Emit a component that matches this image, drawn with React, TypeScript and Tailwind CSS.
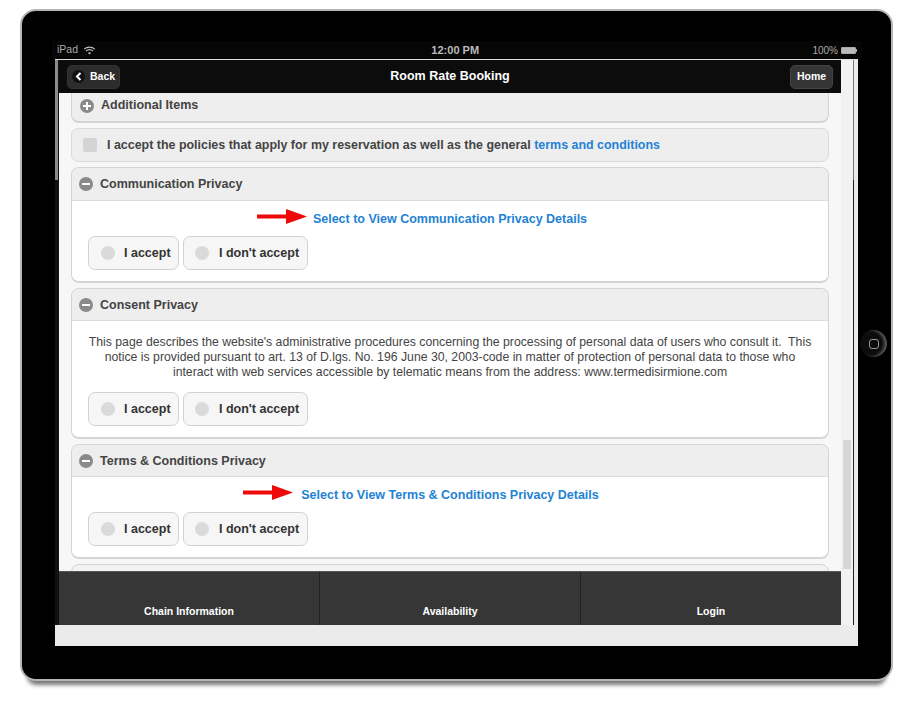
import React from 'react';

function Accept() {
  return (
    <div className="flex gap-[4px]">
      {['I accept', "I don't accept"].map((label, i) => (
        <div key={label} className={`flex h-[34px] items-center rounded-[7px] border border-[#d2d2d2] bg-[#f6f6f6] ${i === 0 ? 'w-[91px] pl-[12px]' : 'w-[125px] pl-[11px]'}`}>
          <span className="h-[14px] w-[14px] shrink-0 rounded-full bg-[#dadada]" />
          <span className={`whitespace-nowrap text-[12.5px] font-bold text-[#333] ${i === 0 ? 'ml-[9px]' : 'ml-[10px]'}`}>{label}</span>
        </div>
      ))}
    </div>
  );
}

function Toggle({ open }: { open?: boolean }) {
  return (
    <span className="relative h-[14px] w-[14px] shrink-0 rounded-full bg-[#8a8a8a]">
      <span className="absolute left-[3px] top-[6px] h-[2px] w-[8px] bg-white" />
      {!open && <span className="absolute left-[6px] top-[3px] h-[8px] w-[2px] bg-white" />}
    </span>
  );
}

function Arrow({ className }: { className: string }) {
  return (
    <svg width="50" height="15" viewBox="0 0 50 15" className={className}>
      <rect x="0" y="5.5" width="30" height="4" fill="#ee0a0a" />
      <polygon points="29,0 50,7.5 29,15" fill="#ee0a0a" />
    </svg>
  );
}

function Section({ title, height, headHeight, children }: { title: string; height: string; headHeight: string; children: React.ReactNode }) {
  return (
    <div className={`${height} overflow-hidden rounded-[8px] border border-[#d4d4d4] border-b-[2px] bg-white`}>
      <div className={`flex ${headHeight} items-center gap-[7px] border-b border-[#dcdcdc] bg-[#eeeeee] pl-[7px]`}>
        <Toggle open />
        <span className="pt-[1px] text-[12.5px] font-bold text-[#444]">{title}</span>
      </div>
      {children}
    </div>
  );
}

function LinkBody({ arrowClass, text }: { arrowClass: string; text: string }) {
  return (
    <div className="px-[16px]">
      <div className="flex h-[35px] items-center justify-center pb-[1px] pt-[2px] text-[12.5px] font-bold text-[#1f82d4]">
        <span className="relative">
          <Arrow className={arrowClass} />
          {text}
        </span>
      </div>
      <Accept />
    </div>
  );
}

export default function App() {
  return (
    <div className="relative h-[709px] w-[908px] overflow-hidden bg-white pl-[20px] pt-[9px] font-['Liberation_Sans',Arial,sans-serif]">
      {/* device */}
      <div className="relative h-[672px] w-[873px] rounded-[16px] border-2 border-[#b5b5b5] bg-black pl-[33px] pt-[30px] shadow-[0_11px_4px_-7px_#777]">
        {/* status bar */}
        <div className="-ml-[3px] flex h-[18px] w-[810px] items-center justify-between bg-[#060606] pl-[5px] pr-[5px] text-[#aaa]">
          <div className="flex items-center gap-[5px] text-[10.5px]">
            <span>iPad</span>
            <svg width="13" height="9" viewBox="0 0 12 9" fill="none" stroke="#bbb" strokeWidth="1.2">
              <path d="M0.7 3.2C3.6 0.3 8.4 0.3 11.3 3.2" />
              <path d="M2.5 5C4.4 3.2 7.6 3.2 9.5 5" />
              <path d="M4.4 6.9C5.3 6 6.7 6 7.6 6.9L6 8.5Z" fill="#bbb" stroke="none" />
            </svg>
          </div>
          <span className="pl-[2px] text-[11px] font-bold text-[#bbb]">12:00 PM</span>
          <div className="flex items-center gap-[3px] text-[10px]">
            <span>100%</span>
            <span className="h-[7px] w-[15px] rounded-[1px] border border-[#aaa] bg-[#bbb]" />
            <span className="-ml-[3px] h-[3px] w-[1px] bg-[#aaa]" />
          </div>
        </div>
        {/* screen */}
        <div className="flex h-[587px] w-[803px] flex-col border-t border-[#ddd] bg-[#ebebeb]">
          <div className="flex h-[565px] shrink-0">
            {/* left edge strip */}
            <div className="h-full w-[4px] shrink-0 bg-[#111]">
              <div className="h-[120px] w-[3px] bg-[#8a8a8a]" />
            </div>
            <div className="flex h-full w-[782px] flex-col bg-[#f7f7f7]">
              <div className="flex h-[33px] shrink-0 items-center justify-between bg-[#0c0c0c] px-[8px]">
                <div className="w-[64px]">
                  <div className="flex h-[24px] w-[53px] items-center gap-[5px] rounded-[5px] border border-[#333] bg-[#2c2c2c] pl-[4px]">
                    <span className="flex h-[13px] w-[13px] items-center justify-center rounded-full bg-[#111]">
                      <svg width="7" height="9" viewBox="0 0 7 9" fill="none" stroke="#fff" strokeWidth="2"><path d="M5.5 1L2 4.5L5.5 8" /></svg>
                    </span>
                    <span className="text-[10.5px] font-bold text-white">Back</span>
                  </div>
                </div>
                <span className="text-[12.5px] font-bold text-white">Room Rate Booking</span>
                <div className="flex w-[64px] justify-end">
                  <div className="flex h-[24px] w-[43px] items-center justify-center rounded-[5px] border border-[#444] bg-[#353535] text-[10.5px] font-bold text-white">Home</div>
                </div>
              </div>
              {/* scrolling content */}
              <div className="flex h-[478px] flex-col gap-[5px] overflow-hidden px-[12px]">
                <div className="flex h-[30px] shrink-0 items-center gap-[7px] rounded-b-[8px] border border-t-0 border-[#d4d4d4] border-b-[2px] bg-[#eeeeee] pb-[3px] pl-[8px]">
                  <Toggle />
                  <span className="text-[12.5px] font-bold text-[#444]">Additional Items</span>
                </div>
                <div className="flex h-[34px] shrink-0 items-center rounded-[7px] border border-[#dadada] bg-[#eeeeee] pl-[11px] text-[12.45px] font-bold text-[#444]">
                  <span className="mr-[10px] h-[14px] w-[14px] rounded-[2px] bg-[#d4d4d4]" />
                  <span>I accept the policies that apply for my reservation as well as the general <span className="text-[#1f82d4]">terms and conditions</span></span>
                </div>
                <div className="shrink-0">
                  <Section title="Communication Privacy" height="h-[116px]" headHeight="h-[33px]">
                    <LinkBody arrowClass="absolute right-full top-[-1px] mr-[6px]" text="Select to View Communication Privacy Details" />
                  </Section>
                </div>
                <div className="shrink-0">
                  <Section title="Consent Privacy" height="h-[151px]" headHeight="h-[32px]">
                    <p className="px-[14px] pb-[12px] pt-[14px] text-center text-[12.25px] leading-[15px] text-[#444]">
                      This page describes the website's administrative procedures concerning the processing of personal data of users who consult it.&nbsp; This notice is provided pursuant to art. 13 of D.lgs. No. 196 June 30, 2003-code in matter of protection of personal data to those who interact with web services accessible by telematic means from the address: www.termedisirmione.com
                    </p>
                    <div className="px-[16px]">
                      <Accept />
                    </div>
                  </Section>
                </div>
                <div className="shrink-0">
                  <Section title="Terms & Conditions Privacy" height="h-[115px]" headHeight="h-[32px]">
                    <LinkBody arrowClass="absolute right-full top-[-1px] mr-[8px]" text="Select to View Terms & Conditions Privacy Details" />
                  </Section>
                </div>
                <div className="h-[20px] shrink-0 rounded-t-[8px] border border-[#d4d4d4] bg-[#f3f3f3]" />
              </div>
              {/* footer tabs */}
              <div className="flex h-[54px] shrink-0 border-t border-[#555] bg-[#363636] text-[10.5px] font-bold text-white">
                {['Chain Information', 'Availability', 'Login'].map((t, i) => (
                  <div key={t} className={`flex flex-1 items-end justify-center pb-[8px] ${i < 2 ? 'border-r border-[#222]' : ''}`}><span className="relative top-[3px]">{t}</span></div>
                ))}
              </div>
            </div>
            {/* scrollbar */}
            <div className="h-full w-[12px] shrink-0 bg-[#f2f2f2] pl-[2px] pt-[380px]">
              <div className="h-[129px] w-[8px] bg-[#d6d6d6]" />
            </div>
            <div className="h-full w-[1px] shrink-0 bg-[#222]">
              <div className="h-[120px] w-[1px] bg-[#777]" />
            </div>
          </div>
        </div>
        {/* home button */}
        <div className="absolute left-[838px] top-[319px] flex h-[27px] w-[27px] items-center justify-center rounded-full bg-[#0c0c0c] shadow-[inset_-3px_0_3px_#555]">
          <span className="h-[10px] w-[10px] rounded-[3px] border border-[#999]" />
        </div>
      </div>
    </div>
  );
}
